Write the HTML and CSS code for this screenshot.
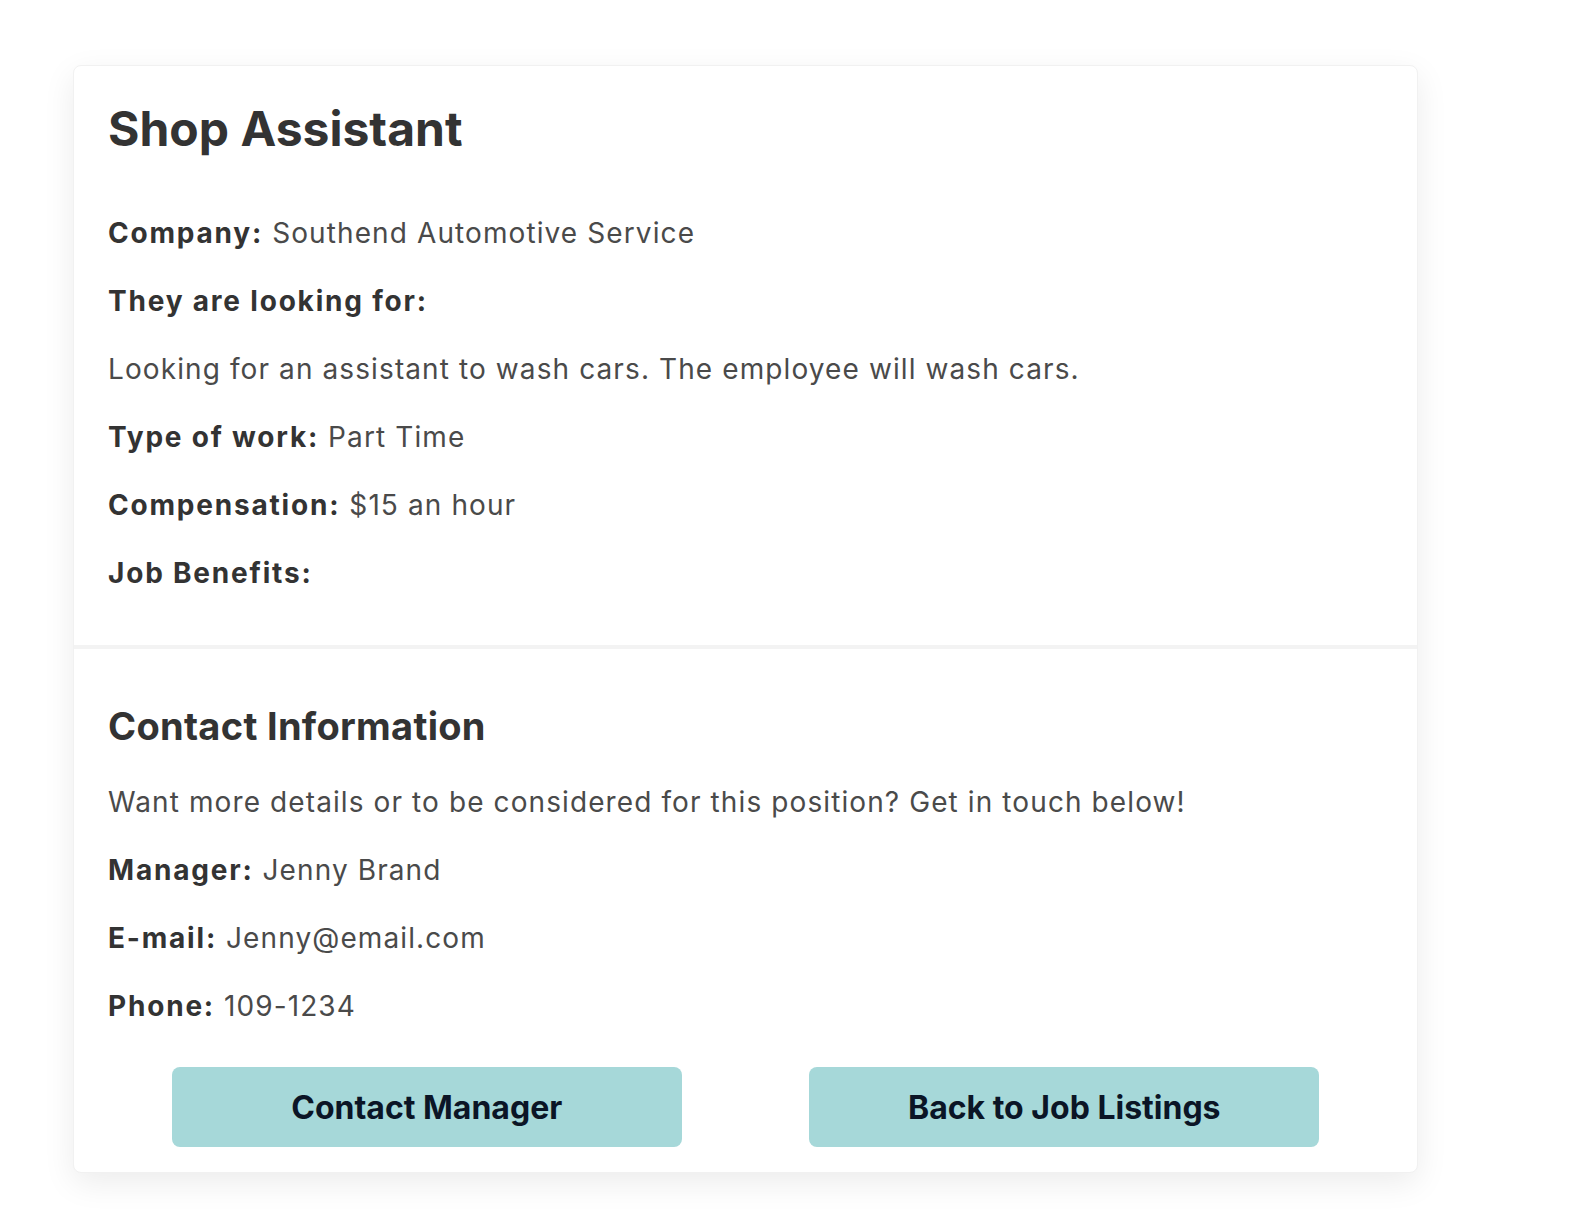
FILE: index.html
```html
<!DOCTYPE html>
<html lang="en">
<head>
<meta charset="utf-8">
<title>Shop Assistant</title>
<link rel="stylesheet" href="styles.css">
</head>
<body>
<main class="page">
  <article class="card">
    <section class="job">
      <h1 class="title">Shop Assistant</h1>
      <p class="row"><span class="label">Company:</span> Southend Automotive Service</p>
      <p class="row"><span class="label">They are looking for:</span></p>
      <p class="row">Looking for an assistant to wash cars. The employee will wash cars.</p>
      <p class="row"><span class="label">Type of work:</span> Part Time</p>
      <p class="row"><span class="label">Compensation:</span> $15 an hour</p>
      <p class="row"><span class="label">Job Benefits:</span></p>
    </section>
    <section class="contact">
      <h2 class="subtitle">Contact Information</h2>
      <p class="row">Want more details or to be considered for this position? Get in touch below!</p>
      <p class="row"><span class="label">Manager:</span> Jenny Brand</p>
      <p class="row"><span class="label">E-mail:</span> Jenny@email.com</p>
      <p class="row"><span class="label">Phone:</span> 109-1234</p>
      <div class="actions">
        <button class="btn" type="button">Contact Manager</button>
        <button class="btn" type="button">Back to Job Listings</button>
      </div>
    </section>
  </article>
</main>
</body>
</html>
```
FILE: styles.css
```css
* { box-sizing: border-box; }

html, body {
  margin: 0;
  padding: 0;
  background: #ffffff;
}

body {
  font-family: Inter, "Noto Sans", "Liberation Sans", sans-serif;
  color: #444444;
}

.page {
  padding: 65px 0 60px 73px;
}

.card {
  width: 1345px;
  background: #ffffff;
  border: 1px solid #f1f1f1;
  border-radius: 8px;
  box-shadow: 0 10px 32px rgba(0, 0, 0, 0.08);
}

.job {
  padding: 34px 34px 24px;
  border-bottom: 4px solid #f3f3f3;
}

.contact {
  padding: 54px 34px 25px;
}

.title {
  margin: 0 0 55px;
  font-size: 48px;
  line-height: 58px;
  font-weight: 700;
  color: #333333;
}

.subtitle {
  margin: 0 0 33px;
  font-size: 38px;
  line-height: 46px;
  font-weight: 700;
  letter-spacing: 0.3px;
  color: #333333;
}

.row {
  margin: 0 0 28px;
  font-size: 28px;
  line-height: 40px;
  font-weight: 400;
  letter-spacing: 1.1px;
  color: #4a4a4a;
}

.label {
  font-weight: 700;
  letter-spacing: 1.8px;
  color: #333333;
}

.actions {
  display: flex;
  justify-content: space-around;
  margin-top: 41px;
}

.contact .row:last-of-type {
  margin-bottom: 0;
}

.btn {
  width: 40%;
  height: 80px;
  border: none;
  border-radius: 8px;
  background: #a6d8d9;
  color: #0b1526;
  font-family: Inter, "Noto Sans", "Liberation Sans", sans-serif;
  font-size: 32px;
  font-weight: 700;
  cursor: pointer;
}
```
